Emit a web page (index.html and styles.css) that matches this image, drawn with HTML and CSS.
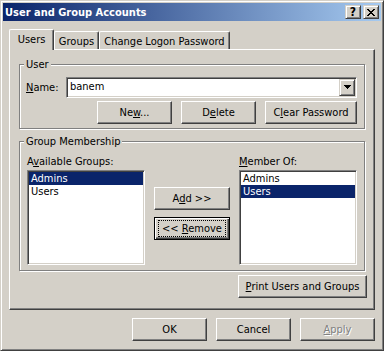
FILE: index.html
```html
<!DOCTYPE html>
<html lang="en">
<head>
    <meta charset="UTF-8">
    <title>User and Group Accounts</title>
    <link rel="stylesheet" href="styles.css">
</head>
<body>

    <div class="window">
        <div class="titlebar">
            <span class="title">User and Group Accounts</span>
            <div class="caption-buttons">
                <button class="cap-btn cap-help">?</button>
                <button class="cap-btn">
                    <svg width="8" height="7" viewBox="0 0 8 7" shape-rendering="crispEdges">
                        <path d="M0 0h2v1h-2z M6 0h2v1h-2z M1 1h2v1h-2z M5 1h2v1h-2z M2 2h4v1h-4z M3 3h2v1h-2z M2 4h4v1h-4z M1 5h2v1h-2z M5 5h2v1h-2z M0 6h2v1h-2z M6 6h2v1h-2z" fill="#000"/>
                    </svg>
                </button>
            </div>
        </div>

        <div class="tabs">
            <div class="tab tab-users active">Users</div>
            <div class="tab tab-groups">Groups</div>
            <div class="tab tab-logon">Change Logon Password</div>
        </div>

        <div class="panel">
            <div class="groupbox user-box">
                <span class="legend">User</span>
                <div class="name-row">
                    <label class="name-label"><u>N</u>ame:</label>
                    <div class="combo">
                        <span class="combo-text">banem</span>
                        <span class="drop-btn">
                            <svg width="7" height="4" viewBox="0 0 7 4" shape-rendering="crispEdges">
                                <path d="M0 0h7v1h-1v1h-1v1h-1v1h-1v-1h-1v-1h-1v-1h-1z" fill="#000"/>
                            </svg>
                        </span>
                    </div>
                </div>
                <div class="btn-row">
                    <button class="btn">Ne<u>w</u>...</button>
                    <button class="btn">D<u>e</u>lete</button>
                    <button class="btn btn-clear">C<u>l</u>ear Password</button>
                </div>
            </div>

            <div class="groupbox member-box">
                <span class="legend">Group Membership</span>
                <div class="member-cols">
                    <div class="list-col">
                        <div class="list-label">A<u>v</u>ailable Groups:</div>
                        <ul class="listbox">
                            <li class="selected">Admins</li>
                            <li>Users</li>
                        </ul>
                    </div>
                    <div class="mid-col">
                        <button class="btn">A<u>d</u>d &gt;&gt;</button>
                        <button class="btn btn-focus">&lt;&lt; <u>R</u>emove</button>
                    </div>
                    <div class="list-col">
                        <div class="list-label"><u>M</u>ember Of:</div>
                        <ul class="listbox">
                            <li>Admins</li>
                            <li class="selected">Users</li>
                        </ul>
                    </div>
                </div>
            </div>

            <div class="print-row">
                <button class="btn btn-print"><u>P</u>rint Users and Groups</button>
            </div>
        </div>

        <div class="dialog-buttons">
            <button class="btn">OK</button>
            <button class="btn">Cancel</button>
            <button class="btn btn-disabled"><u>A</u>pply</button>
        </div>
    </div>

</body>
</html>
```

FILE: styles.css
```css
* {
    box-sizing: border-box;
}

body {
    margin: 0;
    background-color: #d4d0c8;
    font-family: "DejaVu Sans Condensed", "Liberation Sans", sans-serif;
    font-size: 11px;
    line-height: 13px;
    color: #000;
}

button {
    font: inherit;
    color: #000;
    margin: 0;
    padding: 0;
    background-color: #d4d0c8;
}

.window {
    width: 384px;
    height: 351px;
    padding: 2px;
    border: 1px solid;
    border-color: #d4d0c8 #404040 #404040 #d4d0c8;
    box-shadow: inset 1px 1px 0 #fff, inset -1px -1px 0 #808080;
    background-color: #d4d0c8;
    display: flex;
    flex-direction: column;
}

/* barra de titulo */
.titlebar {
    height: 18px;
    display: flex;
    align-items: center;
    justify-content: space-between;
    padding: 0 2px;
    background: linear-gradient(to right, #0a246a, #a6caf0);
}

.title {
    color: #fff;
    font-weight: bold;
}

.caption-buttons {
    display: flex;
    gap: 2px;
}

.cap-btn {
    width: 16px;
    height: 14px;
    display: flex;
    align-items: center;
    justify-content: center;
    border: 1px solid;
    border-color: #d4d0c8 #404040 #404040 #d4d0c8;
    box-shadow: inset 1px 1px 0 #fff, inset -1px -1px 0 #808080;
}

.cap-help {
    font-weight: bold;
    font-size: 12px;
}

/* pestañas */
.tabs {
    display: flex;
    align-items: flex-end;
    height: 20px;
    margin: 8px 0 0 6px;
}

.tab {
    height: 18px;
    padding: 3px 0 1px;
    text-align: center;
    border: 1px solid;
    border-bottom: none;
    border-color: #fff #404040 #404040 #fff;
    border-radius: 2px 2px 0 0;
    box-shadow: inset -1px 0 0 #808080;
    background-color: #d4d0c8;
}

.tab.active {
    height: 21px;
    margin-bottom: -1px;
    padding-bottom: 4px;
    position: relative;
    z-index: 1;
}

.tab-users {
    width: 45px;
}

.tab-groups {
    width: 45px;
}

.tab-logon {
    width: 131px;
}

.panel {
    width: 366px;
    margin-left: 6px;
    padding: 14px 9px 11px 9px;
    border: 1px solid;
    border-color: #fff #404040 #404040 #fff;
    box-shadow: inset -1px -1px 0 #808080;
}

/* cuadros de grupo */
.groupbox {
    position: relative;
    border: 1px solid #808080;
    box-shadow: 1px 1px 0 #fff, inset 1px 1px 0 #fff;
}

.legend {
    position: absolute;
    top: -7px;
    left: 4px;
    padding: 0 2px;
    background-color: #d4d0c8;
}

.user-box {
    padding: 12px 7px 4px 6px;
}

.name-row {
    display: flex;
    align-items: center;
}

.name-label {
    width: 40px;
}

.combo {
    flex: 1;
    height: 21px;
    display: flex;
    padding: 1px;
    border: 1px solid;
    border-color: #808080 #fff #fff #808080;
    box-shadow: inset 1px 1px 0 #404040, inset -1px -1px 0 #d4d0c8;
    background-color: #fff;
}

.combo-text {
    flex: 1;
    padding: 1px 2px;
}

.drop-btn {
    width: 16px;
    height: 17px;
    display: flex;
    align-items: center;
    justify-content: center;
    padding-bottom: 1px;
    border: 1px solid;
    border-color: #d4d0c8 #404040 #404040 #d4d0c8;
    box-shadow: inset 1px 1px 0 #fff, inset -1px -1px 0 #808080;
    background-color: #d4d0c8;
}

.btn-row {
    display: flex;
    justify-content: flex-end;
    gap: 9px;
    margin-top: 3px;
}

.btn {
    width: 75px;
    height: 23px;
    border: 1px solid;
    border-color: #fff #404040 #404040 #fff;
    box-shadow: inset -1px -1px 0 #808080;
}

.btn-clear {
    width: 92px;
}

.member-box {
    margin-top: 12px;
    padding: 13px 7px 5px 7px;
}

.member-cols {
    display: flex;
    gap: 9px;
}

.list-col {
    width: 118px;
}

.list-label {
    margin-bottom: 2px;
}

.listbox {
    height: 95px;
    margin: 0;
    padding: 1px;
    list-style: none;
    border: 1px solid;
    border-color: #808080 #fff #fff #808080;
    box-shadow: inset 1px 1px 0 #404040, inset -1px -1px 0 #d4d0c8;
    background-color: #fff;
}

.listbox li {
    padding: 0 2px;
}

.listbox li.selected {
    background-color: #0a246a;
    color: #fff;
}

.mid-col {
    width: 76px;
    padding-top: 32px;
    display: flex;
    flex-direction: column;
    gap: 7px;
}

.mid-col .btn {
    width: 76px;
}

.btn-focus {
    position: relative;
    border-color: #000;
    box-shadow: inset 1px 1px 0 #fff, inset -1px -1px 0 #404040, inset -2px -2px 0 #808080;
}

.btn-focus::after {
    content: "";
    position: absolute;
    top: 2px;
    left: 3px;
    right: 3px;
    bottom: 2px;
    border: 1px dotted #000;
}

.print-row {
    display: flex;
    justify-content: flex-end;
    margin: 4px -2px 0 0;
}

.btn-print {
    width: 129px;
}

.dialog-buttons {
    display: flex;
    justify-content: flex-end;
    gap: 9px;
    margin: 8px 6px 0 0;
}

.btn-disabled {
    color: #808080;
    text-shadow: 1px 1px 0 #fff;
}
```
